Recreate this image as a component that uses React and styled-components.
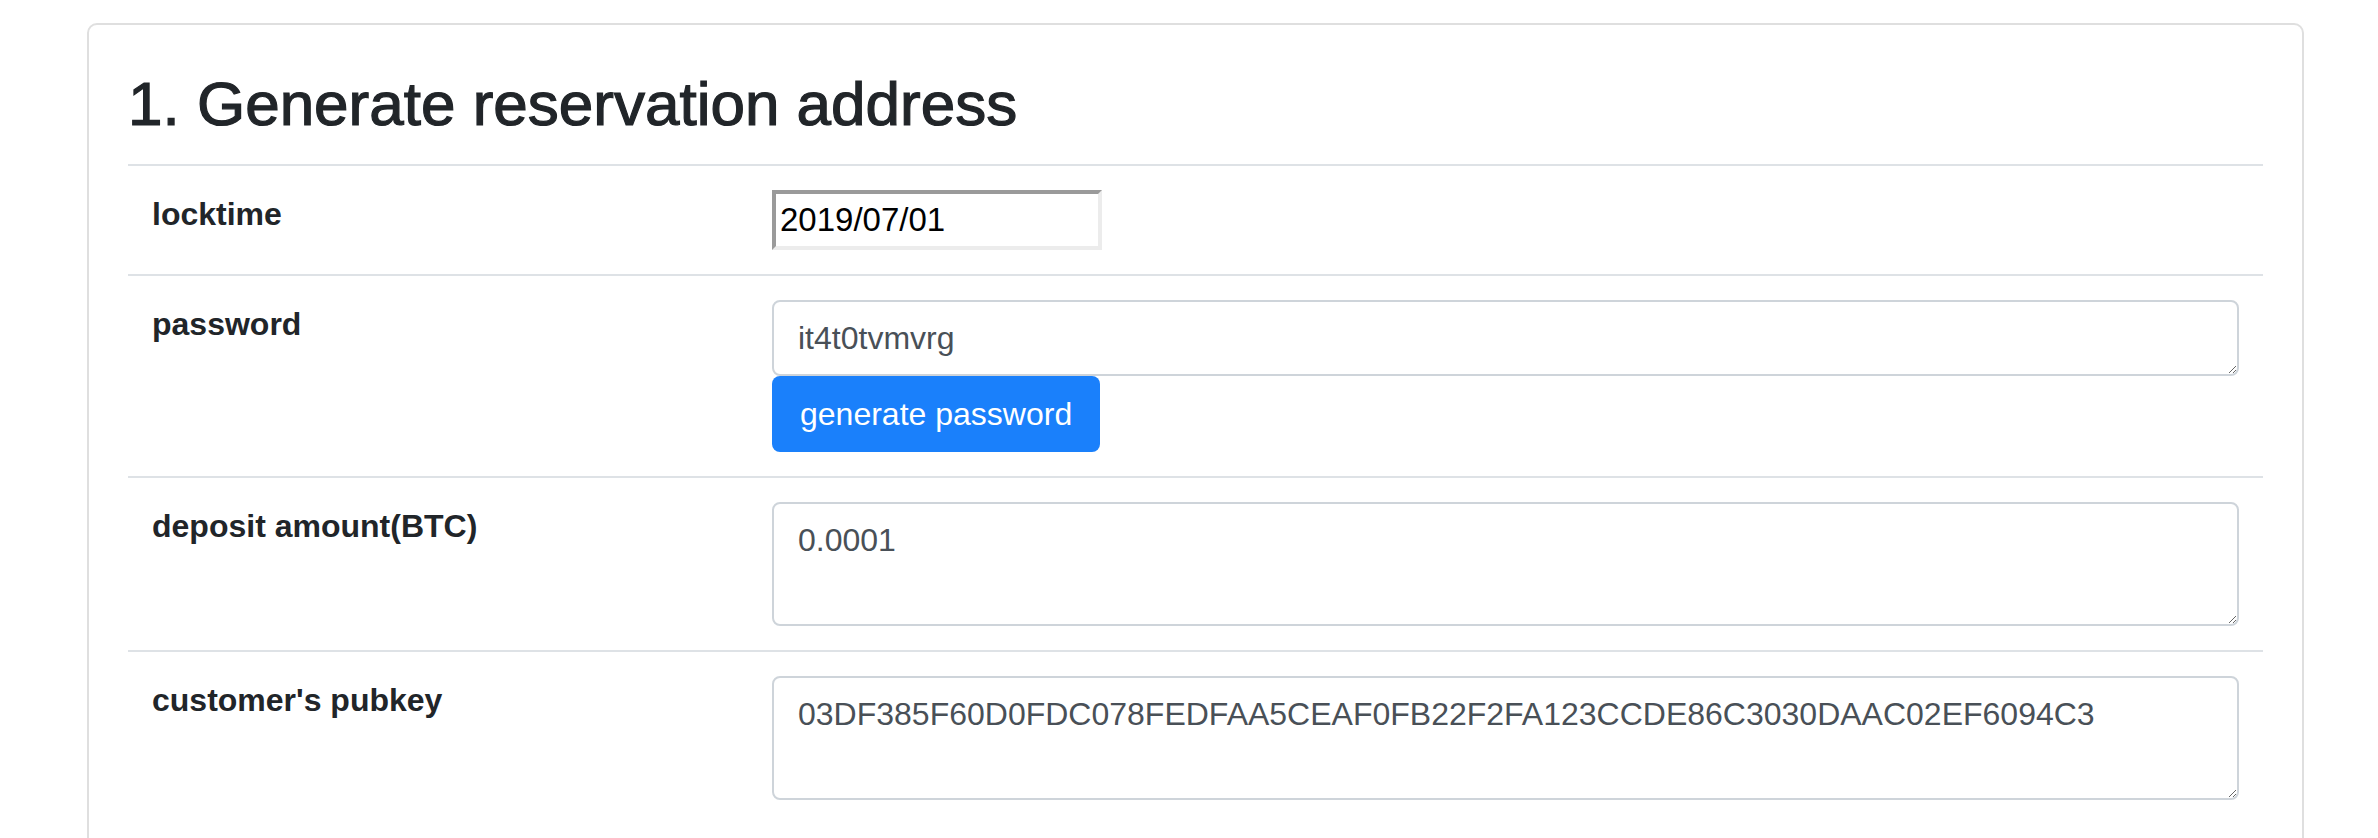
import React from "react";
import styled, { createGlobalStyle } from "styled-components";

const GlobalStyle = createGlobalStyle`
  body {
    margin: 0;
    background: #fff;
    font-family: "Liberation Sans", Arial, sans-serif;
    color: #212529;
  }
  * { box-sizing: border-box; }
`;

const Card = styled.div`
  margin: 23px 0 0 87px;
  width: 2217px;
  border: 2px solid #dfdfdf;
  border-radius: 10px;
  padding: 40px 39px;
  background: #fff;
`;

const Title = styled.h2`
  margin: 2px 0 23px;
  font-size: 62px;
  font-weight: 400;
  line-height: 1.2;
  color: #212529;
  -webkit-text-stroke: 1.2px #212529;
`;

const Table = styled.div`
  display: flex;
  flex-direction: column;
`;

const Row = styled.div`
  display: grid;
  grid-template-columns: 620px 1fr;
  border-top: 2px solid #dee2e6;
`;

const Cell = styled.div`
  padding: 24px;
  display: flex;
  flex-direction: column;
  align-items: flex-start;
`;

const Label = styled.div`
  font-size: 32px;
  font-weight: 700;
  line-height: 48px;
`;

const PlainInput = styled.input`
  width: 330px;
  height: 60px;
  padding: 0 4px;
  font-family: "Liberation Sans", Arial, sans-serif;
  font-size: 33px;
  color: #000;
  border-style: solid;
  border-width: 4px;
  border-color: #9a9a9a #ececec #ececec #9a9a9a;
  outline: none;
`;

const TextArea = styled.textarea`
  width: 100%;
  height: ${(p) => p.$h}px;
  padding: 12px 24px;
  font-family: "Liberation Sans", Arial, sans-serif;
  font-size: 32px;
  line-height: 48px;
  color: #495057;
  background: #fff;
  border: 2px solid #ced4da;
  border-radius: 8px;
  outline: none;
  display: block;
`;

const Button = styled.button`
  height: 76px;
  padding: 0 28px;
  font-family: "Liberation Sans", Arial, sans-serif;
  font-size: 32px;
  line-height: 48px;
  color: #fff;
  background: #1a80fb;
  border: none;
  border-radius: 8px;
  cursor: pointer;
`;

export default function App() {
  return (
    <>
      <GlobalStyle />
      <Card>
        <Title>1. Generate reservation address</Title>
        <Table>
          <Row>
            <Cell>
              <Label>locktime</Label>
            </Cell>
            <Cell>
              <PlainInput defaultValue="2019/07/01" />
            </Cell>
          </Row>
          <Row>
            <Cell>
              <Label>password</Label>
            </Cell>
            <Cell>
              <TextArea $h={76} rows={1} defaultValue="it4t0tvmvrg" />
              <Button>generate password</Button>
            </Cell>
          </Row>
          <Row>
            <Cell>
              <Label>deposit amount(BTC)</Label>
            </Cell>
            <Cell>
              <TextArea $h={124} rows={2} defaultValue="0.0001" />
            </Cell>
          </Row>
          <Row>
            <Cell>
              <Label>customer's pubkey</Label>
            </Cell>
            <Cell>
              <TextArea
                $h={124}
                rows={2}
                defaultValue="03DF385F60D0FDC078FEDFAA5CEAF0FB22F2FA123CCDE86C3030DAAC02EF6094C3"
              />
            </Cell>
          </Row>
        </Table>
      </Card>
    </>
  );
}
